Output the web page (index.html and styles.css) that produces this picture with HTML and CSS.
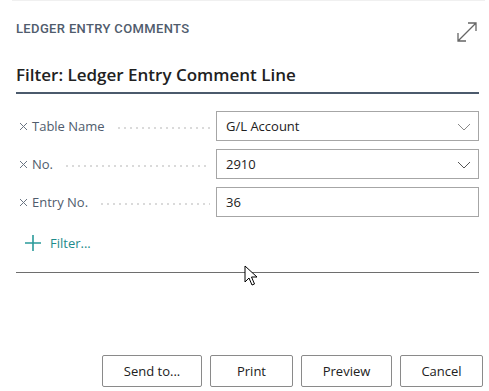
FILE: index.html
```html
<!DOCTYPE html>
<html lang="en">
<head>
  <meta charset="UTF-8" />
  <meta name="viewport" content="width=device-width, initial-scale=1.0" />
  <title>Ledger Entry Comments</title>
  <link rel="stylesheet" href="styles.css">
</head>
<body>
  <div class="dialog">
    <div class="top-edge"></div>

    <div class="head">
      <span class="caption">LEDGER ENTRY COMMENTS</span>
      <svg class="expand" width="24" height="24" viewBox="0 0 24 24">
        <path d="M3 21 L21 3 M13 3 H21 V11 M3 13 V21 H11" fill="none" stroke="#666" stroke-width="1.3" />
      </svg>
    </div>

    <h2 class="filter-title">Filter: Ledger Entry Comment Line</h2>

    <div class="rows">
      <div class="row">
        <label class="label"><svg class="x" width="9" height="9" viewBox="0 0 9 9"><path d="M1 1 L8 8 M8 1 L1 8" stroke="#6b7583" stroke-width="1" /></svg>Table Name<span class="dots"></span></label>
        <div class="field">G/L Account
          <svg class="chev" width="14" height="8" viewBox="0 0 14 8"><path d="M1 1 L7 7 L13 1" fill="none" stroke="#888" stroke-width="1" /></svg>
        </div>
      </div>
      <div class="row">
        <label class="label"><svg class="x" width="9" height="9" viewBox="0 0 9 9"><path d="M1 1 L8 8 M8 1 L1 8" stroke="#6b7583" stroke-width="1" /></svg>No.<span class="dots"></span></label>
        <div class="field">2910
          <svg class="chev" width="14" height="8" viewBox="0 0 14 8"><path d="M1 1 L7 7 L13 1" fill="none" stroke="#555" stroke-width="1" /></svg>
        </div>
      </div>
      <div class="row">
        <label class="label"><svg class="x" width="9" height="9" viewBox="0 0 9 9"><path d="M1 1 L8 8 M8 1 L1 8" stroke="#6b7583" stroke-width="1" /></svg>Entry No.<span class="dots"></span></label>
        <div class="field">36</div>
      </div>
    </div>

    <div class="add-filter">
      <svg width="18" height="18" viewBox="0 0 18 18"><path d="M9 1 V17 M1 9 H17" stroke="#2a9a9a" stroke-width="1.6" /></svg>
      <span>Filter...</span>
    </div>

    <div class="sep"></div>

    <div class="buttons">
      <button class="btn send">Send to...</button>
      <button class="btn print">Print</button>
      <button class="btn preview">Preview</button>
      <button class="btn cancel">Cancel</button>
    </div>

    <svg class="cursor" width="14" height="22" viewBox="0 0 14 22">
      <path d="M1 1 L1 17 L5 13 L8 20 L10.5 19 L7.5 12 L13 12 Z" fill="#fff" stroke="#000" stroke-width="1" stroke-linejoin="round" />
    </svg>
  </div>
</body>
</html>
```

FILE: styles.css
```css
body {
  margin: 0;
  background: #fff;
  font-family: "Open Sans", "Noto Sans", sans-serif;
  color: #212121;
}

.dialog {
  position: relative;
  width: 489px;
  height: 391px;
  box-sizing: border-box;
  padding: 0 10px 0 16px;
}

.top-edge {
  height: 1px;
  margin: 0 -6px 0 -4px;
  background: #f0f0f0;
}

.head {
  display: flex;
  justify-content: space-between;
  align-items: center;
  height: 58px;
}

.caption {
  font-family: "Roboto", sans-serif;
  font-size: 13px;
  font-weight: 500;
  color: #505c6d;
  letter-spacing: 0.35px;
  margin-top: -4px;
}

.expand {
  margin-top: 3px;
}

.filter-title {
  margin: 0;
  font-size: 17px;
  font-weight: 600;
  line-height: 31px;
  padding-bottom: 2px;
  border-bottom: 2px solid #4b5a6c;
}

.rows {
  margin-top: 17px;
  display: flex;
  flex-direction: column;
  gap: 8px;
}

.row {
  display: grid;
  grid-template-columns: 200px 1fr;
  align-items: center;
  height: 30px;
}

.label {
  display: flex;
  align-items: center;
  font-size: 13px;
  color: #505c6d;
}

.x {
  margin: 0 4px 0 3px;
}

.dots {
  flex: 1;
  height: 2px;
  margin: 3px 6px 0 11px;
  background-image: radial-gradient(circle, #dadada 0.8px, transparent 1px);
  background-size: 6px 2px;
}

.field {
  position: relative;
  height: 30px;
  box-sizing: border-box;
  border: 1px solid #a6a6a6;
  padding: 0 9px;
  font-size: 13px;
  line-height: 28px;
  color: #212121;
}

.chev {
  position: absolute;
  right: 7px;
  top: 11px;
}

.add-filter {
  display: flex;
  align-items: center;
  gap: 8px;
  margin: 17px 0 0 8px;
  font-size: 13px;
  color: #1e8b8b;
}

.sep {
  margin-top: 20px;
  height: 1px;
  background: #6e6e6e;
}

.buttons {
  position: absolute;
  right: 6px;
  bottom: 4px;
  display: flex;
  gap: 8px;
}

.btn {
  height: 32px;
  box-sizing: border-box;
  background: #fff;
  border: 1px solid #8a8a8a;
  border-radius: 2px;
  font-family: "Open Sans", "Noto Sans", sans-serif;
  font-size: 13px;
  font-weight: 500;
  color: #212121;
  cursor: pointer;
}

.send { width: 100px; }
.print { width: 83px; }
.preview { width: 91px; }
.cancel { width: 83px; }

.cursor {
  position: absolute;
  left: 244px;
  top: 265px;
}
```
